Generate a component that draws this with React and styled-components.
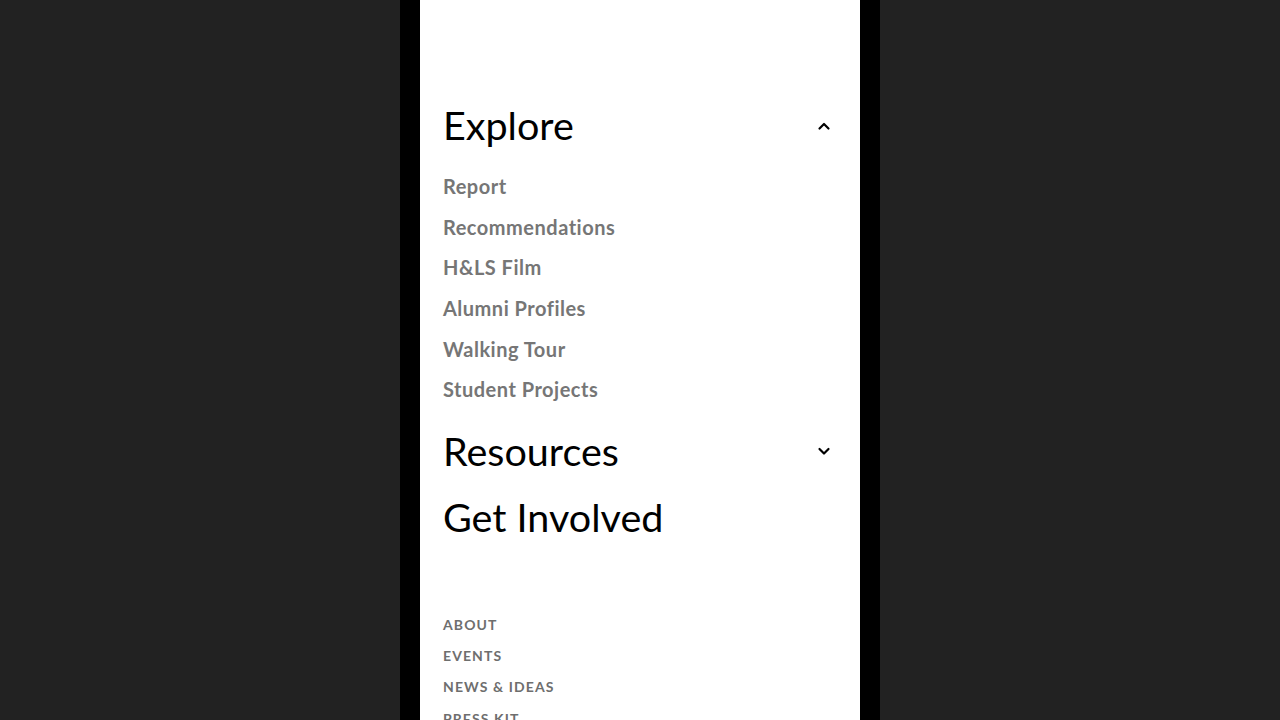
import styled, { createGlobalStyle } from 'styled-components'

const GlobalStyle = createGlobalStyle`
  html, body {
    margin: 0;
    padding: 0;
    background: #222222;
    height: 100%;
    overflow: hidden;
  }
`

const StyledPage = styled.div`
  display: flex;
  justify-content: center;
  height: 720px;
  background: #222222;
`

const StyledFrame = styled.div`
  width: 440px;
  padding: 0 20px;
  background: #000000;
`

const StyledPanel = styled.nav`
  height: 100%;
  background: #ffffff;
  padding: 100px 29px 0 23px;
  box-sizing: border-box;
  font-family: Lato, 'Noto Sans', sans-serif;
  overflow: hidden;
`

const StyledSection = styled.div`
  display: flex;
  flex-direction: column;
`

const StyledHeadingRow = styled.div`
  display: flex;
  align-items: center;
  justify-content: space-between;
  height: ${props => props.height}px;
`

const StyledHeading = styled.a`
  color: #000000;
  font-size: 39.5px;
  font-weight: 400;
  line-height: 1;
  text-decoration: none;
`

const StyledChevron = styled.svg`
  width: 14px;
  height: 14px;
`

const StyledSubList = styled.ul`
  list-style: none;
  margin: 0;
  padding: 16px 0 8px;
`

const StyledSubItem = styled.li`
  color: #767676;
  font-size: 20px;
  font-weight: 700;
  letter-spacing: 0.5px;
  height: 40.6px;
  display: flex;
  align-items: center;
`

const StyledFooterList = styled.ul`
  list-style: none;
  margin: 0;
  padding: 59px 0 0;
`

const StyledFooterItem = styled.li`
  color: #6e6e6e;
  font-size: 14px;
  font-weight: 700;
  letter-spacing: 1.1px;
  text-transform: uppercase;
  height: 31.3px;
  display: flex;
  align-items: center;
`

const Chevron = ({ up }) => (
  <StyledChevron viewBox="0 0 14 14" fill="none" stroke="#000" strokeWidth="2.2" strokeLinecap="round" strokeLinejoin="round">
    {up ? <polyline points="2.5,10.5 7,6 11.5,10.5" /> : <polyline points="2.5,5 7,9.5 11.5,5" />}
  </StyledChevron>
)

const exploreItems = [
  'Report',
  'Recommendations',
  'H&LS Film',
  'Alumni Profiles',
  'Walking Tour',
  'Student Projects',
]

const footerItems = ['About', 'Events', 'News & Ideas', 'Press Kit']

const App = () => (
  <StyledPage>
    <GlobalStyle />
    <StyledFrame>
      <StyledPanel>
        <StyledSection>
          <StyledHeadingRow height={50}>
            <StyledHeading href="#">Explore</StyledHeading>
            <Chevron up />
          </StyledHeadingRow>
          <StyledSubList>
            {exploreItems.map(item => (
              <StyledSubItem key={item}>{item}</StyledSubItem>
            ))}
          </StyledSubList>
        </StyledSection>

        <StyledSection>
          <StyledHeadingRow height={66}>
            <StyledHeading href="#">Resources</StyledHeading>
            <Chevron />
          </StyledHeadingRow>
          <StyledHeadingRow height={66}>
            <StyledHeading href="#">Get Involved</StyledHeading>
          </StyledHeadingRow>
        </StyledSection>

        <StyledFooterList>
          {footerItems.map(item => (
            <StyledFooterItem key={item}>{item}</StyledFooterItem>
          ))}
        </StyledFooterList>
      </StyledPanel>
    </StyledFrame>
  </StyledPage>
)

export default App
